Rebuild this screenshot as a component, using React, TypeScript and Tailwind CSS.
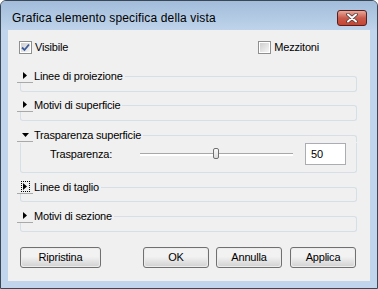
import type { ReactNode } from 'react'

const font = { fontFamily: '"Liberation Sans", Arial, sans-serif' }

const Checkbox = ({ checked }: { checked?: boolean }) => (
  <div className="w-[13px] h-[13px] border border-[#8e8f8f] bg-white p-[1px] shrink-0">
    <div className="w-full h-full bg-gradient-to-br from-[#cfcfcf] to-[#f6f6f6] flex items-center justify-center">
      {checked && (
        <svg width="9" height="9" viewBox="0 0 9 9">
          <path d="M1 4.5 L3.5 7 L8 1.5" fill="none" stroke="#3d5b9c" strokeWidth="1.8" />
        </svg>
      )}
    </div>
  </div>
)

const Arrow = ({ open, focus }: { open?: boolean; focus?: boolean }) => (
  <div className="w-[16px] h-[14px] border-b border-[#a9a9a9] flex items-center justify-center shrink-0">
    <div className={focus ? 'w-[9px] h-[11px] border border-dotted border-black flex items-center justify-center' : 'flex items-center justify-center'}>
      {open ? (
        <svg width="7" height="4" viewBox="0 0 7 4"><path d="M0 0 H7 L3.5 4 Z" fill="#000" /></svg>
      ) : (
        <svg width="4" height="7" viewBox="0 0 4 7"><path d="M0 0 V7 L4 3.5 Z" fill="#000" /></svg>
      )}
    </div>
  </div>
)

const Group = ({ label, open, focus, bodyH, mt, children }: { label: string; open?: boolean; focus?: boolean; bodyH: string; mt: string; children?: ReactNode }) => (
  <div className={`ml-[9px] w-[340px] ${mt}`}>
    <div className="flex h-[14px]">
      <Arrow open={open} focus={focus} />
      <span className="text-[11px] leading-[14px] pl-[1px] tracking-[-0.2px]">{label}</span>
      <div className="flex-1 ml-[2px] mt-[7px] h-[7px] border-t border-r border-[#d5dfe5] rounded-tr-[3px]" />
    </div>
    <div className={`ml-[3px] border-l border-r border-b border-[#d5dfe5] rounded-b-[3px] ${bodyH}`}>{children}</div>
  </div>
)

const Button = ({ label, w, ml }: { label: string; w: string; ml: string }) => (
  <div className={`${w} ${ml} h-[21px] border border-[#707070] rounded-[3px] p-[1px] bg-[#ececec]`}>
    <div className="h-full rounded-[2px] bg-gradient-to-b from-[#f2f2f2] from-45% to-[#d4d4d4] flex items-center justify-center text-[11px] tracking-[-0.2px]">{label}</div>
  </div>
)

export default function App() {
  return (
    <div style={font} className="w-[378px] h-[289px] bg-white">
      <div className="w-full h-full border border-[#3a4755] rounded-t-[6px] bg-[#c1d6ed] flex flex-col">
        <div className="h-[29px] rounded-t-[5px] bg-gradient-to-b from-[#a2bcda] to-[#bfd4eb] flex items-start pt-[9px] pl-[11px] pr-[10px]">
          <span className="text-[12px] leading-[16px] tracking-[0.15px] text-black">Grafica elemento specifica della vista</span>
          <div className="ml-auto w-[30px] h-[16px] rounded-[3px] border border-[#5a1f1c] bg-gradient-to-b from-[#e8a99c] via-[#c85b4c] to-[#c9432f] flex items-center justify-center">
            <svg width="12" height="10" viewBox="0 0 12 10">
              <path d="M2 1.5 L10 8.5 M10 1.5 L2 8.5" stroke="#4a3a3a" strokeWidth="3.6" strokeLinecap="round" />
              <path d="M2 1.5 L10 8.5 M10 1.5 L2 8.5" stroke="#fff" strokeWidth="2" strokeLinecap="round" />
            </svg>
          </div>
        </div>
        <div className="flex-1 mx-[7px] mb-[7px] bg-[#f0f0f0] flex flex-col text-black">
          <div className="flex items-center mt-[11px] h-[13px] pl-[11px] pr-[51px] text-[11px] tracking-[-0.2px]">
            <Checkbox checked />
            <span className="ml-[3px]">Visibile</span>
            <div className="ml-auto flex items-center">
              <Checkbox />
              <span className="ml-[3px]">Mezzitoni</span>
            </div>
          </div>
          <Group label="Linee di proiezione" bodyH="h-[9px]" mt="mt-[15px]" />
          <Group label="Motivi di superficie" bodyH="h-[9px]" mt="mt-[6px]" />
          <Group label="Trasparenza superficie" open bodyH="h-[30px]" mt="mt-[7px]">
            <div className="flex items-center h-[22px] mt-[1px] pl-[29px] text-[11px] tracking-[-0.2px]">
              <span className="w-[90px]">Trasparenza:</span>
              <div className="relative w-[153px] h-[3px] border-t border-[#a8a8a8] bg-white">
                <div className="absolute left-[73px] top-[-6px] w-[6px] h-[11px] rounded-[2px] border border-[#707070] bg-gradient-to-b from-[#fbfbfb] to-[#dcdcdc]" />
              </div>
              <div className="ml-[12px] w-[41px] h-[22px] border border-[#abadb3] bg-white flex items-center pl-[5px]">50</div>
            </div>
          </Group>
          <Group label="Linee di taglio" focus bodyH="h-[8px]" mt="mt-[7px]" />
          <Group label="Motivi di sezione" bodyH="h-[9px]" mt="mt-[7px]" />
          <div className="flex mt-[15px]">
            <Button label="Ripristina" w="w-[81px]" ml="ml-[12px]" />
            <Button label="OK" w="w-[66px]" ml="ml-[42px]" />
            <Button label="Annulla" w="w-[66px]" ml="ml-[7px]" />
            <Button label="Applica" w="w-[66px]" ml="ml-[8px]" />
          </div>
        </div>
      </div>
    </div>
  )
}
